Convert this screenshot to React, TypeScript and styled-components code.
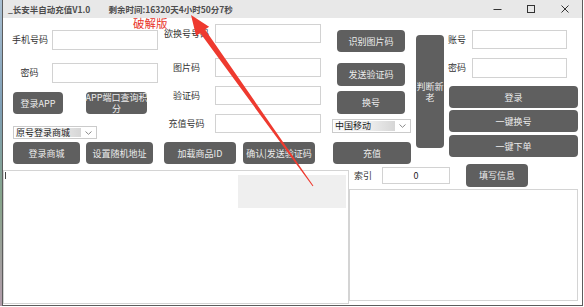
import React from 'react';
import styled, { createGlobalStyle } from 'styled-components';

const GlobalStyle = createGlobalStyle`
  html, body { margin: 0; padding: 0; background: #fff; }
  body { font-family: "Noto Sans CJK SC", "Noto Sans", sans-serif; }
  * { box-sizing: border-box; }
`;

const Screen = styled.div`
  display: flex;
  width: 584px;
  height: 307px;
  overflow: hidden;
  background: #fff;
`;

const DesktopEdge = styled.div`
  flex: none;
  width: 2px;
  height: 306px;
  background: linear-gradient(180deg, #a9bfd2 0%, #7f9fb6 35%, #86a48a 65%, #b39cab 100%);
`;

const Window = styled.div`
  position: relative;
  display: flex;
  flex-direction: column;
  width: 581px;
  height: 306px;
  border: 1px solid #5c5c5c;
  border-top: none;
  background: #fff;
`;

const TitleBar = styled.div`
  display: flex;
  align-items: center;
  height: 18px;
  padding-left: 5px;
  background: #e8e8e8;
  color: #4d4d4d;
  font-size: 8.5px;
  font-weight: bold;
`;

const TitleText = styled.span<{ $ml?: number }>`
  margin-left: ${(p) => p.$ml || 0}px;
  white-space: nowrap;
`;

const Controls = styled.div`
  display: flex;
  margin-left: auto;
`;

const CtrlButton = styled.div`
  display: flex;
  align-items: center;
  justify-content: center;
  width: 34px;
  height: 18px;
  color: #333;
`;

const TopPanel = styled.div`
  display: flex;
  height: 146px;
  padding-left: 9px;
`;

const LeftBlock = styled.div`
  display: flex;
  flex-direction: column;
  width: 399px;
`;

const FieldsRow = styled.div`
  display: flex;
  height: 124px;
`;

const Column = styled.div<{ $w: number; $ml?: number; $pt: number }>`
  display: flex;
  flex-direction: column;
  width: ${(p) => p.$w}px;
  margin-left: ${(p) => p.$ml || 0}px;
  padding-top: ${(p) => p.$pt}px;
`;

const FieldRow = styled.div<{ $mt?: number }>`
  display: flex;
  align-items: center;
  margin-top: ${(p) => p.$mt || 0}px;
`;

const Label = styled.span<{ $w: number; $align?: string; $pr?: number; $pl?: number }>`
  flex: none;
  width: ${(p) => p.$w}px;
  padding-left: ${(p) => p.$pl || 0}px;
  padding-right: ${(p) => p.$pr || 0}px;
  text-align: ${(p) => p.$align || 'center'};
  white-space: nowrap;
  font-size: 9px;
  line-height: 12px;
  color: #333;
`;

const TextBox = styled.div<{ $w: number; $h: number }>`
  position: relative;
  flex: none;
  width: ${(p) => p.$w}px;
  height: ${(p) => p.$h}px;
  border: 1px solid #d2d2d2;
  background: #fff;
  font-size: 9px;
  line-height: ${(p) => p.$h - 2}px;
  text-align: center;
  color: #222;
`;

const ButtonLine = styled.div<{ $mt?: number }>`
  display: flex;
  margin-top: ${(p) => p.$mt || 0}px;
`;

const Button = styled.div<{ $w: number; $h: number; $ml?: number; $mt?: number }>`
  flex: none;
  display: flex;
  align-items: center;
  justify-content: center;
  width: ${(p) => p.$w}px;
  height: ${(p) => p.$h}px;
  margin-left: ${(p) => p.$ml || 0}px;
  margin-top: ${(p) => p.$mt || 0}px;
  border-radius: 4px;
  background: #5f5f5f;
  color: #ececec;
  font-size: 9px;
  line-height: 11px;
  text-align: center;
  white-space: pre;
`;

const SelectBox = styled.div<{ $w: number; $h: number; $ml?: number; $mt?: number }>`
  display: flex;
  align-items: center;
  width: ${(p) => p.$w}px;
  height: ${(p) => p.$h}px;
  margin-left: ${(p) => p.$ml || 0}px;
  margin-top: ${(p) => p.$mt || 0}px;
  padding: 1px;
  border: 1px solid #cbcbcb;
  background: #fff;
`;

const SelectText = styled.span`
  flex: 1;
  height: 100%;
  padding-left: 1px;
  background: linear-gradient(90deg, #fbfbfb 0%, #ececec 60%, #d6d6d6 100%);
  color: #1a1a1a;
  font-size: 9px;
  line-height: 10px;
  white-space: nowrap;
`;

const SelectArrow = styled.span`
  display: flex;
  align-items: center;
  justify-content: center;
  width: 14px;
  height: 100%;
`;

const BottomPanel = styled.div`
  display: flex;
  flex: 1;
`;

const LogBox = styled.div`
  display: flex;
  align-items: flex-start;
  width: 346px;
  height: 134px;
  margin-top: 6px;
  border: 1px solid #d4d4d4;
`;

const Caret = styled.span`
  width: 1px;
  height: 7px;
  margin: 1px 0 0 1px;
  background: #444;
`;

const GreyPatch = styled.div`
  width: 108px;
  height: 33px;
  margin: 4px 2px 0 auto;
  background: #efefef;
`;

const RightPanel = styled.div`
  display: flex;
  flex-direction: column;
  width: 229px;
`;

const IndexRow = styled.div`
  display: flex;
  align-items: center;
  height: 23px;
`;

const Memo = styled.div`
  width: 229px;
  height: 112px;
  margin-top: 2px;
  border: 1px solid #d4d4d4;
`;

const CrackTag = styled.span`
  position: absolute;
  left: 130px;
  top: 16px;
  color: #e8352b;
  font-size: 11.5px;
  line-height: 14px;
  white-space: nowrap;
`;

const ArrowLayer = styled.svg`
  position: absolute;
  left: -3px;
  top: 0;
  pointer-events: none;
`;

const Chevron = () => (
  <svg width="7" height="4" viewBox="0 0 7 4">
    <polyline points="0.5,0.5 3.5,3.3 6.5,0.5" fill="none" stroke="#8a8a8a" strokeWidth="1" />
  </svg>
);

const Select = ({ text, w, h, ml, mt }: { text: string; w: number; h: number; ml?: number; mt?: number }) => (
  <SelectBox $w={w} $h={h} $ml={ml} $mt={mt}>
    <SelectText>{text}</SelectText>
    <SelectArrow>
      <Chevron />
    </SelectArrow>
  </SelectBox>
);

const App = (): JSX.Element => {
  return (
    <Screen>
      <GlobalStyle />
      <DesktopEdge />
      <Window>
        <TitleBar>
          <TitleText>_长安半自动充值V1.0</TitleText>
          <TitleText $ml={18}>剩余时间:16320天4小时50分7秒</TitleText>
          <Controls>
            <CtrlButton>
              <svg width="9" height="9" viewBox="0 0 9 9">
                <line x1="0.5" y1="4.5" x2="8.5" y2="4.5" stroke="#333" strokeWidth="1" />
              </svg>
            </CtrlButton>
            <CtrlButton>
              <svg width="8" height="8" viewBox="0 0 8 8">
                <rect x="0.5" y="0.5" width="7" height="7" fill="none" stroke="#333" strokeWidth="1" />
              </svg>
            </CtrlButton>
            <CtrlButton>
              <svg width="8" height="8" viewBox="0 0 8 8">
                <path d="M0.5 0.5 L7.5 7.5 M7.5 0.5 L0.5 7.5" stroke="#333" strokeWidth="1" />
              </svg>
            </CtrlButton>
          </Controls>
        </TitleBar>

        <TopPanel>
          <LeftBlock>
            <FieldsRow>
              <Column $w={146} $pt={12}>
                <FieldRow>
                  <Label $w={40} $pr={5}>手机号码</Label>
                  <TextBox $w={106} $h={20} />
                </FieldRow>
                <FieldRow $mt={13}>
                  <Label $w={40} $pr={5}>密码</Label>
                  <TextBox $w={106} $h={20} />
                </FieldRow>
                <ButtonLine $mt={9}>
                  <Button $w={50} $h={22} $ml={1}>登录APP</Button>
                  <Button $w={61} $h={22} $ml={23}>{'APP端口查询积\n分'}</Button>
                </ButtonLine>
                <Select text="原号登录商城" w={84} h={13} ml={1} mt={12} />
              </Column>

              <Column $w={158} $ml={6} $pt={6}>
                <FieldRow>
                  <Label $w={51} $pr={6}>欲换号号码</Label>
                  <TextBox $w={106} $h={19} />
                </FieldRow>
                <FieldRow $mt={15}>
                  <Label $w={51} $pr={6}>图片码</Label>
                  <TextBox $w={106} $h={19} />
                </FieldRow>
                <FieldRow $mt={9}>
                  <Label $w={51} $pr={6}>验证码</Label>
                  <TextBox $w={106} $h={19} />
                </FieldRow>
                <FieldRow $mt={9}>
                  <Label $w={51} $pr={6}>充值号码</Label>
                  <TextBox $w={106} $h={19} />
                </FieldRow>
              </Column>

              <Column $w={79} $ml={10} $pt={12}>
                <Button $w={68} $h={22} $ml={5}>识别图片码</Button>
                <Button $w={68} $h={23} $ml={5} $mt={11}>发送验证码</Button>
                <Button $w={68} $h={23} $ml={5} $mt={5}>换号</Button>
                <Select text="中国移动" w={79} h={14} mt={5} />
              </Column>
            </FieldsRow>

            <ButtonLine>
              <Button $w={67} $h={22} $ml={1}>登录商城</Button>
              <Button $w={67} $h={22} $ml={6}>设置随机地址</Button>
              <Button $w={72} $h={22} $ml={11}>加载商品ID</Button>
              <Button $w={72} $h={22} $ml={7}>确认|发送验证码</Button>
              <Button $w={78} $h={22} $ml={18}>充值</Button>
            </ButtonLine>
          </LeftBlock>

          <Button $w={28} $h={113} $ml={5} $mt={17}>{'判断新\n老'}</Button>

          <Column $w={130} $ml={4} $pt={12}>
            <FieldRow>
              <Label $w={24} $align="left">账号</Label>
              <TextBox $w={95} $h={19} />
            </FieldRow>
            <FieldRow $mt={9}>
              <Label $w={24} $align="left">密码</Label>
              <TextBox $w={95} $h={20} />
            </FieldRow>
            <Button $w={129} $h={22} $ml={1} $mt={8}>登录</Button>
            <Button $w={129} $h={22} $ml={1} $mt={2}>一键换号</Button>
            <Button $w={129} $h={22} $ml={1} $mt={3}>一键下单</Button>
          </Column>
        </TopPanel>

        <BottomPanel>
          <LogBox>
            <Caret />
            <GreyPatch />
          </LogBox>
          <RightPanel>
            <IndexRow>
              <Label $w={33} $pl={5} $align="left">索引</Label>
              <TextBox $w={68} $h={17}>0</TextBox>
              <Button $w={62} $h={23} $ml={16}>填写信息</Button>
            </IndexRow>
            <Memo />
          </RightPanel>
        </BottomPanel>

        <CrackTag>破解版</CrackTag>
        <ArrowLayer width="584" height="307" viewBox="0 0 584 307">
          <polygon
            points="191,15 209.1,26.7 205,29.6 313.4,185.7 312.6,186.3 200.2,33 196.1,35.9"
            fill="#ee3a2f"
          />
        </ArrowLayer>
      </Window>
    </Screen>
  );
};

export default App;
